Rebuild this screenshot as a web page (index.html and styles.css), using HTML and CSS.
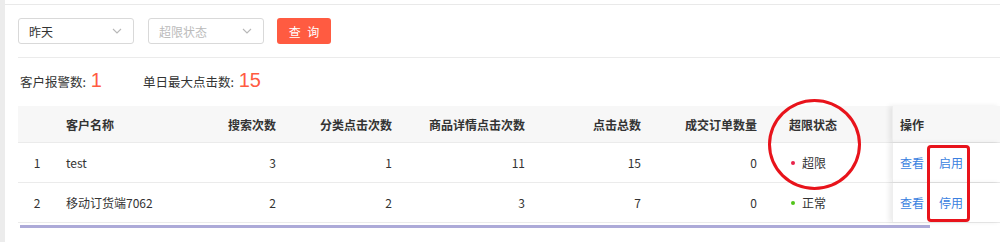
FILE: index.html
```html
<!DOCTYPE html>
<html lang="zh-CN">
<head>
    <meta charset="UTF-8">
    <title>客户报警</title>
    <link rel="stylesheet" href="styles.css">
</head>
<body>
    <div class="page">
        <div class="topbar"></div>
        <div class="filters">
            <div class="select">
                <span>昨天</span>
                <svg class="arrow" width="10" height="6" viewBox="0 0 10 6"><path d="M1 1l4 4 4-4" fill="none" stroke="#b8b8b8" stroke-width="1.1"/></svg>
            </div>
            <div class="select placeholder">
                <span>超限状态</span>
                <svg class="arrow" width="10" height="6" viewBox="0 0 10 6"><path d="M1 1l4 4 4-4" fill="none" stroke="#b8b8b8" stroke-width="1.1"/></svg>
            </div>
            <button class="btn-query">查 询</button>
        </div>
        <div class="stats">
            <div class="stat">客户报警数: <em>1</em></div>
            <div class="stat">单日最大点击数: <em>15</em></div>
        </div>
        <div class="table">
            <div class="row head">
                <div class="c c-idx"></div>
                <div class="c c-name">客户名称</div>
                <div class="c c-num w116">搜索次数</div>
                <div class="c c-num w116">分类点击次数</div>
                <div class="c c-num w133">商品详情点击次数</div>
                <div class="c c-num w116">点击总数</div>
                <div class="c c-num w116">成交订单数量</div>
                <div class="c c-status">超限状态</div>
                <div class="c c-op">操作</div>
            </div>
            <div class="row">
                <div class="c c-idx">1</div>
                <div class="c c-name">test</div>
                <div class="c c-num w116">3</div>
                <div class="c c-num w116">1</div>
                <div class="c c-num w133">11</div>
                <div class="c c-num w116">15</div>
                <div class="c c-num w116">0</div>
                <div class="c c-status"><i class="dot red"></i>超限</div>
                <div class="c c-op"><a>查看</a><a>启用</a></div>
            </div>
            <div class="row">
                <div class="c c-idx">2</div>
                <div class="c c-name">移动订货端7062</div>
                <div class="c c-num w116">2</div>
                <div class="c c-num w116">2</div>
                <div class="c c-num w133">3</div>
                <div class="c c-num w116">7</div>
                <div class="c c-num w116">0</div>
                <div class="c c-status"><i class="dot green"></i>正常</div>
                <div class="c c-op"><a>查看</a><a>停用</a></div>
            </div>
        </div>
        <div class="scrollbar"></div>

        <div class="mark-circle"></div>
        <div class="mark-box"></div>
    </div>
</body>
</html>
```

FILE: styles.css
```css
body {
    margin: 0;
    background: #ececec;
    font-family: "Noto Sans CJK SC", "Liberation Sans", sans-serif;
    color: #333;
}
.page {
    position: relative;
    margin-left: 5px;
    height: 242px;
    background: #fff;
    overflow: hidden;
}
.topbar {
    height: 4px;
    border-bottom: 1px solid #e9e9e9;
}
.filters {
    display: flex;
    align-items: center;
    gap: 14px;
    margin-left: 13px;
    padding: 13px 0 13px;
    border-bottom: 1px solid #ebebeb;
}
.select {
    box-sizing: border-box;
    width: 116px;
    height: 26px;
    border: 1px solid #d9d9d9;
    border-radius: 3px;
    display: flex;
    align-items: center;
    justify-content: space-between;
    padding: 0 11px 0 10px;
    font-size: 12px;
    color: #333;
}
.select.placeholder {
    color: #bbb;
}
.btn-query {
    width: 54px;
    height: 26px;
    margin-left: -1px;
    border: 0;
    border-radius: 3px;
    background: #ff5b41;
    color: #fff;
    font-family: inherit;
    font-size: 12px;
    letter-spacing: 2px;
    padding: 0 0 0 2px;
}
.stats {
    display: flex;
    gap: 41px;
    align-items: baseline;
    margin-left: 15px;
    height: 48px;
    line-height: 44px;
}
.stat {
    font-size: 12.5px;
    color: #333;
}
.stat em {
    font-style: normal;
    font-family: "Liberation Sans", sans-serif;
    font-size: 20px;
    color: #ff5b41;
    margin-left: 2px;
}
.table {
    margin-left: 13px;
    font-size: 12px;
}
.row {
    display: flex;
    height: 40px;
    border-bottom: 1px solid #ebebeb;
    box-sizing: border-box;
}
.row.head {
    height: 37px;
    background: #f7f7f7;
    font-weight: bold;
    color: #333;
}
.c {
    box-sizing: border-box;
    display: flex;
    align-items: center;
    padding: 0 10px;
}
.c-idx {
    width: 38px;
    justify-content: center;
    padding: 0;
}
.c-name {
    width: 114px;
}
.c-num {
    justify-content: flex-end;
}
.w116 {
    width: 116px;
}
.w133 {
    width: 133px;
}
.c-status {
    width: 125px;
    padding-left: 22px;
}
.c-op {
    flex: 1;
    padding-left: 7px;
    gap: 15px;
    box-shadow: -3px 0 5px rgba(0, 0, 0, 0.08);
    border-left: 1px solid #eee;
    background: #fff;
}
.head .c-op {
    background: #f7f7f7;
}
.c-op a {
    color: #3a7fe0;
}
.dot {
    display: inline-block;
    width: 4px;
    height: 4px;
    border-radius: 50%;
    margin: 0 7px 0 2px;
}
.dot.red {
    background: #e8234a;
}
.dot.green {
    background: #52c41a;
}
.scrollbar {
    width: 910px;
    height: 3px;
    margin: 2px 0 0 15px;
    background: #adaad8;
}
.mark-circle {
    position: absolute;
    left: 763px;
    top: 99px;
    width: 87px;
    height: 85px;
    border: 3.5px solid #e8131b;
    border-radius: 50%;
}
.mark-box {
    position: absolute;
    left: 922px;
    top: 145px;
    width: 37px;
    height: 71px;
    border: 3px solid #e8131b;
    border-radius: 4px;
}
```
